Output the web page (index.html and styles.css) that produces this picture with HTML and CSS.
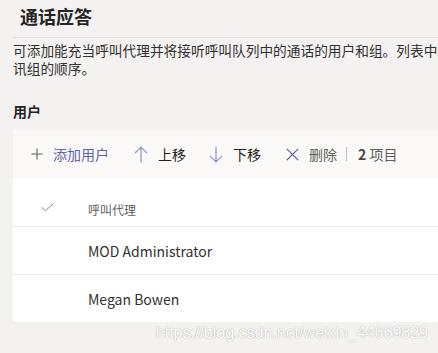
FILE: index.html
```html
<!DOCTYPE html>
<html lang="zh-CN">
<head>
<meta charset="utf-8">
<title>通话应答</title>
<link rel="stylesheet" href="styles.css">
</head>
<body>
<div class="page">
  <h1 class="title">通话应答</h1>
  <p class="desc">
    <span class="line">可添加能充当呼叫代理并将接听呼叫队列中的通话的用户和组。列表中的顺序将决定呼叫转接到用户和通</span>
    <span class="line">讯组的顺序。</span>
  </p>
  <h2 class="section">用户</h2>
  <div class="card">
    <div class="toolbar">
      <span class="btn btn-add">
        <svg class="ico ico-plus" width="12" height="12" viewBox="0 0 12 12"><path d="M6 0.5V11.5M0.5 6H11.5" stroke="#616161" stroke-width="1.1" fill="none"/></svg>
        <span class="lbl-add">添加用户</span>
      </span>
      <span class="btn btn-up">
        <svg class="ico" width="14" height="17" viewBox="0 0 14 17"><path d="M7 1.2V16.5M1 7.2L7 1.2L13 7.2" stroke="#8f90cc" stroke-width="1.2" fill="none"/></svg>
        <span class="lbl">上移</span>
      </span>
      <span class="btn btn-down">
        <svg class="ico" width="14" height="17" viewBox="0 0 14 17"><path d="M7 0.5V15.8M1 9.8L7 15.8L13 9.8" stroke="#8f90cc" stroke-width="1.2" fill="none"/></svg>
        <span class="lbl">下移</span>
      </span>
      <span class="btn btn-del">
        <svg class="ico" width="13" height="13" viewBox="0 0 13 13"><path d="M0.8 0.8L12.2 12.2M12.2 0.8L0.8 12.2" stroke="#5d5f9c" stroke-width="1.2" fill="none"/></svg>
        <span class="lbl-muted">删除</span>
      </span>
      <span class="sep"></span>
      <span class="count"><b>2</b> 项目</span>
    </div>
    <div class="row row-head">
      <svg class="check" width="13" height="9" viewBox="0 0 13 9"><path d="M0.6 4.2L4.3 7.9L12.4 0.6" stroke="#8a8886" stroke-width="1" fill="none"/></svg>
      <span class="col-head">呼叫代理</span>
    </div>
    <div class="row"><span class="name">MOD Administrator</span></div>
    <div class="row"><span class="name">Megan Bowen</span></div>
  </div>
</div>
<div class="watermark">https://blog.csdn.net/weixin_44669829</div>
</body>
</html>
```

FILE: styles.css
```css
html, body {
  margin: 0;
  padding: 0;
}
body {
  background: #f3f2f1;
  width: 438px;
  height: 353px;
  overflow: hidden;
  position: relative;
  font-family: "Noto Sans CJK SC", "Noto Sans", sans-serif;
  color: #252423;
}
.page {
  padding-left: 13px;
  width: 760px;
}
.title {
  margin: 0;
  padding: 4px 0 9px 7px;
  font-size: 18px;
  line-height: 24px;
  font-weight: 700;
  border-bottom: 1px solid #e1dfdd;
}
.desc {
  margin: 3px 0 0 0;
  font-size: 13.7px;
  line-height: 18px;
  color: #323130;
}
.line {
  display: block;
  white-space: nowrap;
}
.section {
  margin: 24px 0 0 0;
  font-size: 14px;
  line-height: 20px;
  font-weight: 700;
}
.card {
  margin-top: 9px;
  width: 700px;
  background: #fff;
  border-radius: 4px;
  overflow: hidden;
}
.toolbar {
  height: 48px;
  background: #faf9f8;
  display: flex;
  align-items: center;
  padding-left: 18px;
  font-size: 14px;
  line-height: 20px;
}
.btn {
  display: flex;
  align-items: center;
}
.ico {
  display: block;
}
.btn-add .ico { margin-right: 10px; }
.lbl-add { color: #6264a7; }
.btn-up { margin-left: 25px; }
.btn-up .ico { margin-right: 10px; }
.btn-down { margin-left: 23px; }
.btn-down .ico { margin-right: 10px; }
.btn-del { margin-left: 25px; }
.btn-del .ico { margin-right: 10px; }
.lbl { color: #252423; }
.lbl-muted { color: #605e5c; }
.sep {
  width: 1px;
  height: 14px;
  background: #c8c6c4;
  margin-left: 9px;
}
.count {
  margin-left: 11px;
  color: #605e5c;
}
.count b {
  color: #484644;
  font-weight: 700;
}
.row {
  height: 47px;
  border-top: 1px solid #edebe9;
  display: flex;
  align-items: center;
  padding-left: 75px;
  font-size: 14px;
}
.row-head {
  height: 48px;
  border-top: 0;
  padding-left: 28px;
  align-items: flex-start;
}
.check {
  display: block;
  margin-top: 25px;
}
.col-head {
  margin-left: 34px;
  margin-top: 24px;
  font-size: 12px;
  line-height: 16px;
  color: #605e5c;
}
.name {
  color: #323130;
  line-height: 20px;
}
.watermark {
  position: absolute;
  right: 10px;
  top: 324px;
  font-family: "Liberation Sans", Arial, sans-serif;
  font-size: 16px;
  line-height: 18px;
  color: #ffffff;
  text-shadow: 0 0 1px rgba(0, 0, 0, 0.3), 0 0 2px rgba(0, 0, 0, 0.12);
  white-space: nowrap;
}
```
